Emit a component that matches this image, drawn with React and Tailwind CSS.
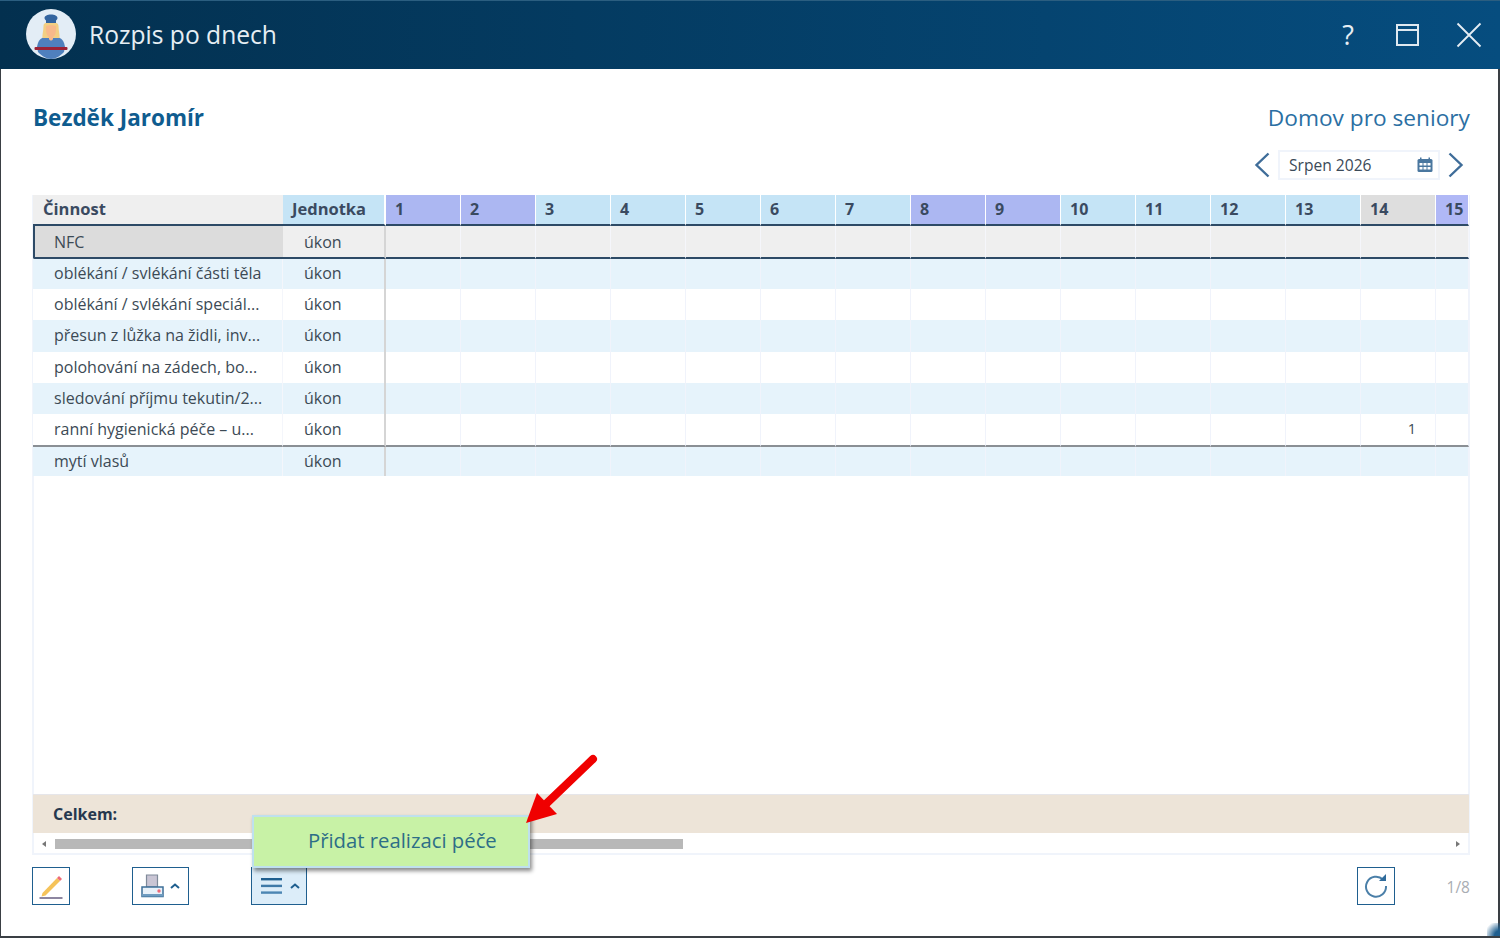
import React from "react";

const days = [
  { n: 1, bg: "bg-[#acb7f2]" },
  { n: 2, bg: "bg-[#acb7f2]" },
  { n: 3, bg: "bg-[#c5e4f6]" },
  { n: 4, bg: "bg-[#c5e4f6]" },
  { n: 5, bg: "bg-[#c5e4f6]" },
  { n: 6, bg: "bg-[#c5e4f6]" },
  { n: 7, bg: "bg-[#c5e4f6]" },
  { n: 8, bg: "bg-[#acb7f2]" },
  { n: 9, bg: "bg-[#acb7f2]" },
  { n: 10, bg: "bg-[#c5e4f6]" },
  { n: 11, bg: "bg-[#c5e4f6]" },
  { n: 12, bg: "bg-[#c5e4f6]" },
  { n: 13, bg: "bg-[#c5e4f6]" },
  { n: 14, bg: "bg-[#dedede]" },
  { n: 15, bg: "bg-[#b0b8f6]" },
];

const rows = [
  { name: "oblékání / svlékání části těla", h: "h-[30px]" },
  { name: "oblékání / svlékání speciál...", h: "h-[31px]" },
  { name: "přesun z lůžka na židli, inv...", h: "h-[32px]" },
  { name: "polohování na zádech, bo...", h: "h-[31px]" },
  { name: "sledování příjmu tekutin/2...", h: "h-[31px]" },
  { name: "ranní hygienická péče – u...", h: "h-[33px]", values: { 14: 1 } },
  { name: "mytí vlasů", h: "h-[29px]" },
];

const gridCols = "grid grid-cols-[250px_103px_repeat(14,75px)_33px]";

const Avatar = () => (
  <svg width="50" height="50" viewBox="0 0 50 50">
    <circle cx="25" cy="25" r="25" fill="#e3edf6" />
    <path d="M11 38c1-6 3-9 8-10h12c5 1 7 4 8 10l-1 5c-4 4-8 7-13 7s-9-3-13-7z" fill="#4f80bd" />
    <path d="M17.500 17c0-3 3-4 7.500-4s7.500 1 7.500 4c0 5 1.500 9 1 12H16.500c-.5-3 1-7 1-12z" fill="#f3cf83" />
    <path d="M20 17c2-1 8-1 10 0 .5 6-1 10-3 11v2c-1 2-3 2-4 0v-2c-2-1-3.500-5-3-11z" fill="#f8b98a" />
    <path d="M18.500 9c0-2 3-3.500 6.500-3.500s6.500 1.500 6.500 3.500c0 1.500-1.500 2.500-1.500 2.500v2.500H20v-2.500S18.500 10.500 18.500 9z" fill="#33649f" />
    <rect x="8.500" y="38" width="33" height="3" rx="1" fill="#9c2236" />
  </svg>
);

const CalendarIcon = () => (
  <svg width="16" height="16" viewBox="0 0 16 16">
    <rect x="0.500" y="2" width="15" height="13" rx="1.500" fill="#4a779f" />
    <rect x="3" y="0.500" width="1.500" height="3" fill="#4a779f" />
    <rect x="11.500" y="0.500" width="1.500" height="3" fill="#4a779f" />
    <g fill="#fff">
      <rect x="2.500" y="6" width="3" height="2.500" />
      <rect x="6.500" y="6" width="3" height="2.500" />
      <rect x="10.500" y="6" width="3" height="2.500" />
      <rect x="2.500" y="10" width="3" height="2.500" />
      <rect x="6.500" y="10" width="3" height="2.500" />
      <rect x="10.500" y="10" width="3" height="2.500" />
    </g>
  </svg>
);

const Chevron = ({ left }) => (
  <svg width="16" height="26" viewBox="0 0 16 26" fill="none" stroke="#3f6d99" strokeWidth="2.4">
    <path d={left ? "M14.500 1.500 2.500 13l12 11.500" : "M1.500 1.500 13.500 13 1.500 24.500"} />
  </svg>
);

const CaretUp = () => (
  <svg width="10" height="6" viewBox="0 0 10 6" fill="none" stroke="#1f5f8f" strokeWidth="2">
    <path d="M1 5 5 1.500 9 5" />
  </svg>
);

const App = () => {
  return (
    <div className="relative w-[1500px] h-[938px] overflow-hidden bg-white font-['Open_Sans',sans-serif]">
      <div className="flex flex-col h-[938px] border-l border-r-2 border-b-2 border-[#3a3f44]">
        {/* Title bar */}
        <div className="-mx-px -mr-0.5 h-[69px] shrink-0 flex items-center bg-gradient-to-r from-[#03304f] to-[#064d7f] border-t border-[#2b5e80] pl-[26px] pr-[18px]">
          <div className="-mt-[2px] flex">
            <Avatar />
          </div>
          <span className="ml-[13px] text-[24.6px] text-[#e6eef4]">Rozpis po dnech</span>
          <span className="ml-auto text-[27px] text-[#e6eef4]">?</span>
          <svg className="ml-[42px]" width="24" height="24" viewBox="0 0 24 24" fill="none" stroke="#dfe9f0" strokeWidth="2">
            <rect x="1" y="2" width="21" height="20" />
            <path d="M1 7h21" />
          </svg>
          <svg className="ml-[36px]" width="26" height="26" viewBox="0 0 26 26" fill="none" stroke="#e6eef4" strokeWidth="1.8">
            <path d="M1.500 1.500 24.500 24.500M24.500 1.500 1.500 24.500" />
          </svg>
        </div>

        <div className="flex-1 flex flex-col pl-[31px] pr-[28px] min-h-0">
          {/* Name row */}
          <div className="flex justify-between items-center h-[36px] mt-[31px]">
            <span className="ml-[1px] text-[22.5px] font-bold text-[#0f5c8f]">Bezděk Jaromír</span>
            <span className="text-[22.7px] text-[#2b6fa3]">Domov pro seniory</span>
          </div>

          {/* Month picker */}
          <div className="flex justify-end items-center gap-[8px] h-[30px] mt-[14px] mr-[6px]">
            <Chevron left />
            <div className="w-[162px] h-[30px] flex items-center justify-between border-2 border-[#f0f4fb] pl-[9px] pr-[5px] text-[15.6px] text-[#3b4a58]">
              <span className="pt-[2px]">Srpen 2026</span>
              <CalendarIcon />
            </div>
            <Chevron />
          </div>

          {/* Table */}
          <div className="mt-[15px] flex-1 min-h-0 flex flex-col border-x-2 border-b-2 border-[#f0f4fb] w-[1438px]">
            <div className={`${gridCols} h-[31px] -ml-[1px] text-[16px] font-bold text-[#3a4a60]`}>
              <div className="bg-[#efefef] border-b-2 border-[#2d4a66] pl-[10px] pb-[1px] flex items-center text-[16.5px]">Činnost</div>
              <div className="bg-[#c5e4f6] border-b-2 border-[#2d4a66] pl-[9px] pb-[1px] flex items-center border-r-2 border-r-white text-[16.5px]">Jednotka</div>
              {days.map((d) => (
                <div key={d.n} className={`${d.bg} border-b-2 border-[#2d4a66] border-r border-r-white pl-[9px] pb-[1px] flex items-center`}>
                  {d.n}
                </div>
              ))}
            </div>

            <div className={`${gridCols} h-[33px] -ml-[1px] text-[16px] text-[#3c4a55]`}>
              <div className="bg-[#dcdcdc] border-l-2 border-b-2 border-[#2d4a66] pl-[19px] flex items-center rounded-bl-[2px]">NFC</div>
              <div className="bg-[#efefef] border-b-2 border-[#2d4a66] pl-[21px] flex items-center border-r-2 border-r-[#d5d5d5]">úkon</div>
              {days.map((d) => (
                <div key={d.n} className="bg-[#efefef] border-b-2 border-[#2d4a66] border-r border-r-[#f5f6fb]" />
              ))}
            </div>

            {rows.map((r, i) => (
              <div
                key={r.name}
                className={`${gridCols} -ml-[1px] text-[16px] text-[#3c4a55] ${r.h} ${i % 2 === 0 ? "bg-[#e6f3fb]" : "bg-white"}`}
              >
                <div className={`pl-[21px] pb-[2px] flex items-center whitespace-nowrap border-r border-r-[#f4f6fb] ${i === 5 ? "border-b-2 border-b-[#8a8f94]" : ""}`}>{r.name}</div>
                <div className={`pl-[21px] pb-[2px] flex items-center border-r-2 border-r-[#d5d5d5] ${i === 5 ? "border-b-2 border-b-[#8a8f94]" : ""}`}>úkon</div>
                {days.map((d) => (
                  <div key={d.n} className={`flex items-center justify-end pr-[19px] pb-[2px] border-r border-r-[#f0f3fb] text-[14.5px] ${i === 5 ? "border-b-2 border-b-[#8a8f94]" : ""}`}>
                    {r.values?.[d.n]}
                  </div>
                ))}
              </div>
            ))}

            <div className="flex-1" />

            <div className="h-[39px] -ml-[1px] w-[1436px] bg-[#ede4d8] border-t border-[#e6e6ea] pl-[20px] flex items-center text-[16px] font-bold text-[#26384f]">
              Celkem:
            </div>

            {/* Scrollbar */}
            <div className="h-[20px] flex items-center pl-[8px] pr-[8px] pt-[2px]">
              <span className="w-0 h-0 border-y-[3px] border-y-transparent border-r-[4px] border-r-[#777]" />
              <div className="ml-[9px] w-[628px] h-[10px] bg-[#b8b8b8]" />
              <span className="ml-auto w-0 h-0 border-y-[3px] border-y-transparent border-l-[4px] border-l-[#777]" />
            </div>
          </div>

          {/* Toolbar */}
          <div className="flex items-center h-[38px] mt-[12px] mb-[31px]">
            <button className="w-[38px] h-[38px] flex items-center justify-center border border-[#1f5f8f]">
              <svg width="26" height="26" viewBox="0 0 26 26">
                <path d="M4.500 20 19 5l3 3L7.500 22.500l-4 1z" fill="#f5c35a" />
                <path d="M19 5l2-2 3 3-2 2z" fill="#ee6a78" />
                <rect x="1.500" y="24" width="23" height="2" fill="#8d86a0" />
              </svg>
            </button>
            <button className="ml-[62px] w-[57px] h-[38px] flex items-center border border-[#1f5f8f] pl-[8px] gap-[6px]">
              <svg width="23" height="25" viewBox="0 0 23 25">
                <path d="M5.500 1h11v12h-11z" fill="#c9c5d4" stroke="#7f8a99" strokeWidth="1.2" />
                <rect x="1" y="13" width="21" height="9.500" fill="#e8f1f9" stroke="#3d6f98" strokeWidth="1.5" />
                <rect x="1" y="20" width="21" height="2.500" fill="#6f9cc0" />
                <circle cx="18" cy="17" r="1.700" fill="#ee6a78" />
              </svg>
              <CaretUp />
            </button>
            <button className="ml-[62px] w-[56px] h-[38px] flex items-center bg-[#dcedf9] border border-[#1f5f8f] pl-[9px] gap-[8px]">
              <svg width="21" height="16" viewBox="0 0 21 16" fill="#1f5f8f">
                <rect y="0" width="21" height="2.400" />
                <rect y="6.700" width="21" height="2.400" fill="#3f7aa8" />
                <rect y="13.400" width="21" height="2.400" fill="#4c86b3" />
              </svg>
              <CaretUp />
            </button>
            <button className="ml-auto mr-[52px] w-[38px] h-[38px] flex items-center justify-center border border-[#1f5f8f]">
              <svg width="24" height="24" viewBox="0 0 24 24" fill="none">
                <path d="M19 5.500A10 10 0 1 0 22 12" stroke="#4a7fa8" strokeWidth="2" />
                <path d="M15 7h7V0z" fill="#2f6b9b" />
              </svg>
            </button>
            <span className="pt-[3px] text-[15.5px] text-[#a9adb3]">1/8</span>
          </div>
        </div>
      </div>

      {/* Popup menu over the toolbar */}
      <div className="absolute left-[252px] top-[815px] w-[278px] h-[53px] bg-[#c8f2a6] border-2 border-[#bfe0ee] shadow-[2px_3px_4px_rgba(0,0,0,0.45)] flex items-center pl-[54px] pb-[2px] text-[20.3px] text-[#2d6e87]">
        Přidat realizaci péče
      </div>

      {/* Red arrow annotation */}
      <svg className="absolute left-[520px] top-[750px]" width="85" height="80" viewBox="0 0 85 80">
        <path d="M73 9 27 53" stroke="#f00000" strokeWidth="8" strokeLinecap="round" />
        <path d="M6 73 17 43 37 64z" fill="#f00000" />
      </svg>

      {/* Corner of the window behind */}
      <div className="absolute right-0 bottom-[2px] w-[13px] h-[13px] bg-[radial-gradient(circle_at_100%_100%,#1f5f8f_30%,transparent_85%)]" />
    </div>
  );
};

export default App;
